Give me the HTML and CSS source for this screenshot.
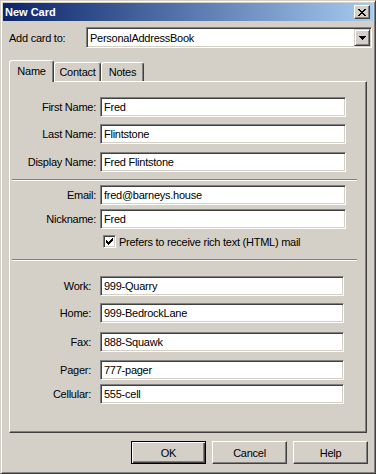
FILE: index.html
```html
<!DOCTYPE html>
<html lang="en">
<head>
    <meta charset="UTF-8">
    <title>New Card</title>
    <link rel="stylesheet" href="styles.css">
</head>
<body>
    <div class="window">
        <div class="titlebar">
            <span class="title">New Card</span>
            <span class="close-btn">
                <svg width="8" height="7" shape-rendering="crispEdges">
                    <path d="M0 0h2v1H0z M6 0h2v1H6z M1 1h2v1H1z M5 1h2v1H5z M2 2h4v1H2z M3 3h2v1H3z M2 4h4v1H2z M1 5h2v1H1z M5 5h2v1H5z M0 6h2v1H0z M6 6h2v1H6z" fill="#000"/>
                </svg>
            </span>
        </div>

        <div class="dialog">
            <div class="addto">
                <span class="addto-label">Add card to:</span>
                <div class="combo">
                    <span class="combo-text">PersonalAddressBook</span>
                    <span class="combo-btn">
                        <svg width="7" height="4" shape-rendering="crispEdges">
                            <path d="M0 0h7v1H0z M1 1h5v1H1z M2 2h3v1H2z M3 3h1v1H3z" fill="#000"/>
                        </svg>
                    </span>
                </div>
            </div>

            <div class="tabs">
                <div class="tab tab-active tab-name">Name</div>
                <div class="tab tab-contact">Contact</div>
                <div class="tab tab-notes">Notes</div>
            </div>

            <div class="panel">
                <div class="row row-first">
                    <span class="lbl">First Name:</span>
                    <div class="field">Fred</div>
                </div>
                <div class="row row-last">
                    <span class="lbl">Last Name:</span>
                    <div class="field">Flintstone</div>
                </div>
                <div class="row row-display">
                    <span class="lbl">Display Name:</span>
                    <div class="field">Fred Flintstone</div>
                </div>

                <div class="separator sep-one"></div>

                <div class="row row-email">
                    <span class="lbl">Email:</span>
                    <div class="field">fred@barneys.house</div>
                </div>
                <div class="row row-nick">
                    <span class="lbl">Nickname:</span>
                    <div class="field">Fred</div>
                </div>
                <div class="check-row">
                    <span class="checkbox">
                        <svg width="7" height="7" shape-rendering="crispEdges">
                            <path d="M6 0h1v1H6z M5 1h2v1H5z M0 2h1v1H0z M4 2h3v1H4z M0 3h2v1H0z M3 3h3v1H3z M0 4h5v1H0z M1 5h3v1H1z M2 6h1v1H2z" fill="#000"/>
                        </svg>
                    </span>
                    <span class="check-text">Prefers to receive rich text (HTML) mail</span>
                </div>

                <div class="separator sep-two"></div>

                <div class="row phone row-work">
                    <span class="lbl">Work:</span>
                    <div class="field">999-Quarry</div>
                </div>
                <div class="row phone row-home">
                    <span class="lbl">Home:</span>
                    <div class="field">999-BedrockLane</div>
                </div>
                <div class="row phone row-fax">
                    <span class="lbl">Fax:</span>
                    <div class="field">888-Squawk</div>
                </div>
                <div class="row phone row-pager">
                    <span class="lbl">Pager:</span>
                    <div class="field">777-pager</div>
                </div>
                <div class="row phone row-cell">
                    <span class="lbl">Cellular:</span>
                    <div class="field">555-cell</div>
                </div>
            </div>

            <div class="buttons">
                <div class="btn btn-default">OK</div>
                <div class="btn">Cancel</div>
                <div class="btn">Help</div>
            </div>
        </div>
    </div>
</body>
</html>
```

FILE: styles.css
```css
* {
    box-sizing: border-box;
}

body {
    margin: 0;
    background-color: #d4d0c8;
    font-family: "Liberation Sans", Arial, sans-serif;
    font-size: 11px;
    letter-spacing: -0.25px;
    color: #000;
}

.window {
    width: 376px;
    height: 474px;
    background-color: #d4d0c8;
    border: 1px solid;
    border-color: #d4d0c8 #404040 #404040 #d4d0c8;
    box-shadow: inset 1px 1px #fff, inset -1px -1px #808080;
    padding: 2px;
    display: flex;
    flex-direction: column;
}

.titlebar {
    height: 18px;
    background: linear-gradient(to right, #0a246a, #a6caf0);
    display: flex;
    align-items: center;
    justify-content: space-between;
    padding: 0 3px 0 2px;
}

.title {
    color: #fff;
    font-weight: bold;
    letter-spacing: 0;
}

.close-btn {
    width: 16px;
    height: 14px;
    background-color: #d4d0c8;
    border: 1px solid;
    border-color: #fff #404040 #404040 #fff;
    box-shadow: inset -1px -1px #808080;
    display: flex;
    align-items: center;
    justify-content: center;
}

.dialog {
    flex: 1;
    padding: 6px 0 0 6px;
    display: flex;
    flex-direction: column;
}

/* add card to */
.addto {
    display: flex;
    align-items: center;
    height: 21px;
}

.addto-label {
    width: 77px;
}

.combo {
    width: 286px;
    height: 21px;
    background-color: #fff;
    border: 1px solid;
    border-color: #808080 #fff #fff #808080;
    box-shadow: inset 1px 1px #404040, inset -1px -1px #d4d0c8;
    padding: 1px 1px 1px 3px;
    display: flex;
    align-items: center;
}

.combo-text {
    flex: 1;
}

.combo-btn {
    width: 16px;
    height: 17px;
    background-color: #d4d0c8;
    border: 1px solid;
    border-color: #d4d0c8 #404040 #404040 #d4d0c8;
    box-shadow: inset 1px 1px #fff, inset -1px -1px #808080;
    display: flex;
    align-items: center;
    justify-content: center;
}

/* tabs */
.tabs {
    display: flex;
    align-items: flex-end;
    height: 21px;
    margin-top: 12px;
}

.tab {
    height: 19px;
    background-color: #d4d0c8;
    border-top: 1px solid #fff;
    border-left: 1px solid #fff;
    border-right: 1px solid #404040;
    box-shadow: inset -1px 0 #808080;
    border-radius: 3px 3px 0 0;
    display: flex;
    align-items: center;
    justify-content: center;
}

.tab-active {
    height: 22px;
    margin-bottom: -1px;
    position: relative;
    z-index: 1;
    padding-bottom: 1px;
}

.tab-name {
    width: 45px;
}

.tab-contact {
    width: 47px;
}

.tab-notes {
    width: 43px;
}

.panel {
    width: 358px;
    height: 352px;
    border: 1px solid;
    border-color: #fff #404040 #404040 #fff;
    box-shadow: inset -1px -1px #808080;
    padding-top: 15px;
    display: flex;
    flex-direction: column;
}

/* form rows */
.row {
    display: flex;
    align-items: center;
    height: 20px;
}

.lbl {
    width: 86px;
    margin-right: 4px;
    text-align: right;
}

.field {
    width: 246px;
    height: 20px;
    background-color: #fff;
    border: 1px solid;
    border-color: #808080 #fff #fff #808080;
    box-shadow: inset 1px 1px #404040, inset -1px -1px #d4d0c8;
    padding: 0 3px;
    display: flex;
    align-items: center;
    white-space: nowrap;
}

.phone .lbl {
    width: 81px;
    margin-right: 9px;
}

.phone .field {
    width: 244px;
}

.row-last { margin-top: 7px; }
.row-display { margin-top: 8px; }
.row-email { margin-top: 4px; }
.row-nick { margin-top: 4px; }
.row-work { margin-top: 15px; }
.row-home { margin-top: 7px; }
.row-fax { margin-top: 9px; }
.row-pager { margin-top: 8px; }
.row-cell { margin-top: 4px; }

.separator {
    width: 345px;
    height: 2px;
    margin-left: 2px;
    border-top: 1px solid #808080;
    border-bottom: 1px solid #fff;
}

.sep-one { margin-top: 7px; }
.sep-two { margin-top: 11px; }

.check-row {
    display: flex;
    align-items: center;
    height: 13px;
    margin-top: 6px;
    padding-left: 93px;
}

.checkbox {
    width: 13px;
    height: 13px;
    background-color: #fff;
    border: 1px solid;
    border-color: #808080 #fff #fff #808080;
    box-shadow: inset 1px 1px #404040, inset -1px -1px #d4d0c8;
    display: flex;
    align-items: center;
    justify-content: center;
}

.check-text {
    margin-left: 3px;
}

/* buttons */
.buttons {
    display: flex;
    justify-content: flex-end;
    gap: 6px;
    margin-top: 8px;
    margin-right: 5px;
}

.btn {
    width: 75px;
    height: 23px;
    border: 1px solid;
    border-color: #fff #404040 #404040 #fff;
    box-shadow: inset -1px -1px #808080;
    display: flex;
    align-items: center;
    justify-content: center;
}

.btn-default {
    border-color: #000;
    box-shadow: inset 1px 1px #fff, inset -1px -1px #404040, inset -2px -2px #808080;
}
```
